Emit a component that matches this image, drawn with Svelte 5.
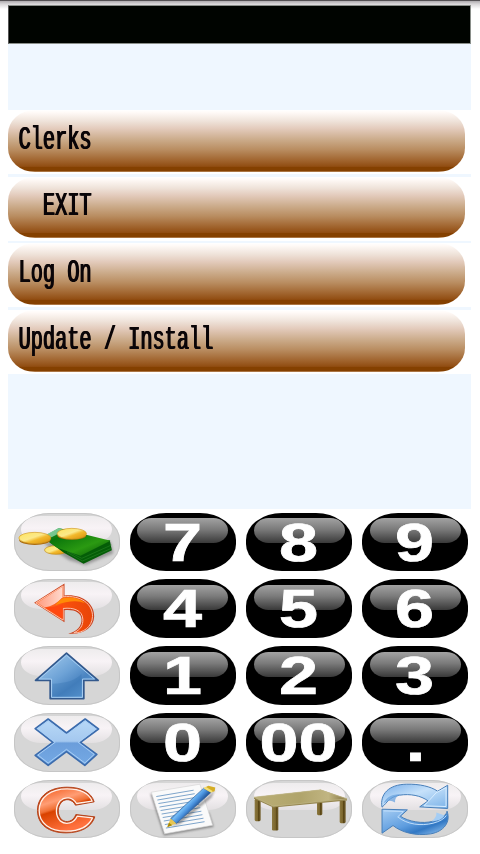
<script>
  const menu = ['Clerks', '  EXIT', 'Log On', 'Update / Install'];
  const keys = [
    'cash', '7', '8', '9',
    'back', '4', '5', '6',
    'up', '1', '2', '3',
    'cancel', '0', '00', '.',
    'clear', 'note', 'table', 'refresh'
  ];
  const isIcon = (k) => /^[a-z]/.test(k);
</script>

<div class="screen">
  <header></header>
  <main>
    <div class="spacer"></div>
    <div class="menu">
      {#each menu as item}
        <div class="row"><button class="item"><span>{item}</span></button></div>
      {/each}
    </div>
  </main>
  <div class="pad">
    {#each keys as k, i}
      <button class="key" class:light={isIcon(k)} aria-label={k}>
        <i class="gloss"></i>
        <svg viewBox="0 0 106 59" width="106" height="59">
          {#if k === 'cash'}
            <defs>
              <linearGradient id="bill" x1="0" y1="0" x2="1" y2="1"><stop offset="0" stop-color="#2f9c3a" /><stop offset=".3" stop-color="#0b760b" /><stop offset=".65" stop-color="#2b9a12" /><stop offset="1" stop-color="#045504" /></linearGradient>
              <linearGradient id="coin" x1="0" y1="0" x2="1" y2="1"><stop offset="0" stop-color="#ffe45a" /><stop offset=".45" stop-color="#fbe98b" /><stop offset=".6" stop-color="#f2b92c" /><stop offset="1" stop-color="#d98b08" /></linearGradient>
              <filter id="soft" x="-20%" y="-40%" width="140%" height="180%"><feGaussianBlur stdDeviation="5" /></filter>
            </defs>
            <g transform="translate(-13.5,-13) scale(.33333)">
              <path d="M130 130L205 180 255 195 338 160 330 125 200 120z" fill="#555" opacity=".5" filter="url(#soft)" />
              <ellipse cx="167" cy="150" rx="35" ry="13" fill="url(#coin)" stroke="#c08916" stroke-width="2" />
              <path d="M135 118L190 158 249 191 334 151 328 121 200 125z" fill="#045d07" />
              <path d="M200 157L246 183 333 145M200 153L244 175 333 135" fill="none" stroke="#2f8c2a" stroke-width="1.5" />
              <path d="M125 112L175 84 330 122 240 167 170 143z" fill="url(#bill)" />
              <path d="M135 105L175 84 185 87Q176 102 153 112z" fill="#8ed7ac" opacity=".8" />
              <ellipse cx="103" cy="120" rx="47" ry="15" fill="#a9680a" />
              <ellipse cx="103" cy="114" rx="48" ry="17" fill="url(#coin)" stroke="#d29a25" stroke-width="2" />
              <ellipse cx="214" cy="107" rx="43" ry="12" fill="#aa7408" />
              <ellipse cx="214" cy="101" rx="44" ry="16" fill="url(#coin)" stroke="#d29a25" stroke-width="2" />
            </g>
          {:else if k === 'back'}
            <defs>
              <linearGradient id="undo" x1="0" y1="0" x2="1" y2="0"><stop offset="0" stop-color="#ff7b42" /><stop offset=".5" stop-color="#f9500d" /><stop offset="1" stop-color="#e84508" /></linearGradient>
              <linearGradient id="undoHi" x1="0" y1="0" x2="1" y2="0"><stop offset="0" stop-color="#ff9c80" /><stop offset="1" stop-color="#ffd9cd" /></linearGradient>
            </defs>
            <g transform="translate(-13.5,-9.5) scale(.33333)" stroke-linejoin="round">
              <path d="M101 100L192 42V78C245 73 282 102 281 141C280 175 246 197 203 192C230 187 244 169 243 149C242 129 221 119 192 122V158z" fill="#c9421d" />
              <path d="M106 100L188 49V82C242 76 277 104 276 141C275 172 248 191 220 190C240 181 248 167 247 149C246 123 220 113 188 117V152z" fill="url(#undo)" stroke="#ffc1aa" stroke-width="3" />
              <path d="M111 100L186 52V83Q165 108 133 114z" fill="url(#undoHi)" />
              <path d="M186 86Q230 79 254 101Q222 87 164 107Q175 92 186 86z" fill="#ff8b07" />
              <path d="M133 114Q165 112 187 105V148z" fill="#ff4811" />
            </g>
          {:else if k === 'up'}
            <defs><linearGradient id="upFill" x1="0" y1="0" x2="1" y2="1"><stop offset="0" stop-color="#aed3f2" /><stop offset=".45" stop-color="#6da2d6" /><stop offset=".65" stop-color="#4a84c1" /><stop offset="1" stop-color="#74b0e6" /></linearGradient></defs>
            <g transform="translate(-13.5,-6.3) scale(.33333)" stroke-linejoin="round">
              <path d="M198 40L293 122H250V177H149V122H105z" fill="url(#upFill)" stroke="#33598d" stroke-width="5" />
              <path d="M198 47L282 118H246V173H153V118H116z" fill="none" stroke="#a5ccf0" stroke-width="3" />
              <path d="M156 132Q220 130 243 102V170H156z" fill="#2d6cad" opacity=".3" />
            </g>
          {:else if k === 'cancel'}
            <defs><linearGradient id="xFill" x1="0" y1="0" x2="0" y2="1"><stop offset="0" stop-color="#b9d9f7" /><stop offset=".48" stop-color="#a4c8ef" /><stop offset=".52" stop-color="#6b9edb" /><stop offset="1" stop-color="#74a9e4" /></linearGradient></defs>
            <g transform="translate(-13.5,-73) scale(.33333)" stroke-linejoin="round">
              <path d="M143 237L198 279 254 237 294 267 240 307 289 343 253 376 198 335 143 376 104 346 157 307 104 266z" fill="url(#xFill)" stroke="#3c6cad" stroke-width="5" />
              <path d="M143 243L198 285 254 243 287 267 233 307 281 343 253 369 198 328 143 369 112 345 164 307 112 266z" fill="none" stroke="#a8cef5" stroke-width="3" />
            </g>
          {:else if k === 'clear'}
            <defs><linearGradient id="cFill" x1="0" y1="0" x2=".4" y2="1"><stop offset="0" stop-color="#f25818" /><stop offset=".35" stop-color="#ff9d74" /><stop offset=".5" stop-color="#f07035" /><stop offset=".55" stop-color="#d94200" /><stop offset="1" stop-color="#ff713e" /></linearGradient></defs>
            <g transform="translate(-13.5,-7.8) scale(.33333)" stroke-linejoin="round">
              <path d="M281 89L225 99C216 81 195 77 183 90C170 106 170 127 183 142C197 154 219 148 226 127L283 134C273 166 239 182 197 182C145 182 111 158 111 115C111 71 147 45 200 45C241 45 272 59 281 89z" fill="#c44311" stroke="#b4441d" stroke-width="3" />
              <path d="M275 87L228 94C217 75 194 71 179 86C164 104 164 130 179 146C197 160 221 153 230 132L276 137C264 163 235 177 197 177C149 177 116 154 116 115C116 75 151 50 200 50C238 50 265 62 275 87z" fill="url(#cFill)" stroke="#fff0e8" stroke-width="4" />
            </g>
          {:else if k === 'note'}
            <defs>
              <linearGradient id="pen" gradientUnits="userSpaceOnUse" x1="188" y1="88" x2="213" y2="112"><stop offset="0" stop-color="#3674ba" /><stop offset=".3" stop-color="#75bcf6" /><stop offset=".65" stop-color="#4991dd" /><stop offset="1" stop-color="#285b9d" /></linearGradient>
              <filter id="noteShadow"><feGaussianBlur stdDeviation="3" /></filter>
            </defs>
            <g transform="translate(-7.7,-7.8) scale(.33333)">
              <path d="M84 64L125 190 274 164 260 121z" fill="#555" opacity=".65" filter="url(#noteShadow)" />
              <path d="M87 60L233 36 271 159 127 185z" fill="#fafafa" stroke="#d5d5d5" stroke-width="2" />
              {#each [0, 1, 2, 3, 4, 5, 6, 7, 8, 9] as n}
                <path d={`M${102 + n * 3.2} ${73 + n * 10.5}l${n < 2 ? 112 : 116} -19`} stroke="#7da5cb" stroke-width="3" />
              {/each}
              <path d="M145 163L265 67 279 50 268 75 174 155z" fill="#333" opacity=".45" filter="url(#noteShadow)" />
              <path d="M145 139L244 48 266 61 162 154z" fill="url(#pen)" stroke="#315f98" stroke-width="2" />
              <path d="M244 48L258 41 279 46 277 57 266 61z" fill="#d5ad24" />
              <path d="M244 48L250 44 272 57 266 61z" fill="#f2df78" />
              <path d="M145 139L135 164 162 154z" fill="#e7c653" />
              <path d="M140 152L135 165 150 159z" fill="#a88700" />
            </g>
          {:else if k === 'table'}
            <defs>
              <linearGradient id="wood" x1="0" y1="0" x2="1" y2="0"><stop offset="0" stop-color="#bbae76" /><stop offset=".5" stop-color="#b0a46b" /><stop offset=".8" stop-color="#c1b582" /><stop offset="1" stop-color="#81703c" /></linearGradient>
              <linearGradient id="leg" x1="0" y1="0" x2="1" y2="0"><stop offset="0" stop-color="#8b7840" /><stop offset=".55" stop-color="#7a652c" /><stop offset=".6" stop-color="#574413" /><stop offset="1" stop-color="#74602e" /></linearGradient>
            </defs>
            <g transform="translate(-6,-7.8) scale(.33333)">
              <rect x="44" y="80" width="18" height="67" rx="4" fill="url(#leg)" />
              <rect x="231" y="90" width="16" height="39" rx="4" fill="url(#leg)" />
              <rect x="299" y="84" width="18" height="69" rx="4" fill="url(#leg)" />
              <rect x="96" y="101" width="19" height="74" rx="4" fill="url(#leg)" />
              <path d="M42 75L242 53 321 80V85L100 106 42 80z" fill="#94844d" />
              <path d="M42 75L242 53 321 80 100 102z" fill="url(#wood)" stroke="#c3b98b" stroke-width="2" />
            </g>
          {:else if k === 'refresh'}
            <defs>
              <linearGradient id="r1" x1="0" y1="0" x2="1" y2="1"><stop offset="0" stop-color="#77aeea" /><stop offset=".45" stop-color="#c6e1fa" /><stop offset="1" stop-color="#7ab2e8" /></linearGradient>
              <linearGradient id="r2" x1="0" y1="0" x2="1" y2="1"><stop offset="0" stop-color="#a6cdf3" /><stop offset=".5" stop-color="#5e9ddf" /><stop offset=".7" stop-color="#3278c4" /><stop offset="1" stop-color="#a4d1fa" /></linearGradient>
            </defs>
            <g transform="translate(-122.3,-7.8) scale(.33333)" stroke-linejoin="round" stroke="#477eb9" stroke-width="3">
              <path d="M427 105C420 66 447 37 500 36C540 35 573 43 594 57L624 39V109L540 104 565 86C543 70 512 64 479 69C448 75 443 91 427 105z" fill="url(#r1)" />
              <path d="M431 94C440 73 459 66 482 66Q464 75 466 91Q448 79 431 94z" fill="#69a3df" stroke="none" opacity=".75" />
              <path d="M570 83L589 62 619 46V103L553 101z" fill="none" stroke="#d8edff" />
              <path d="M427 111L503 113 482 132C505 148 549 156 580 147C609 139 621 126 622 117C634 150 612 178 573 185C528 192 486 181 460 160L427 183z" fill="url(#r2)" />
              <path d="M432 116L491 118 474 134C502 157 544 162 580 153Q610 145 620 130" fill="none" stroke="#c1defa" />
              <path d="M590 121Q592 136 575 148Q605 146 615 130z" fill="#a4cdf4" stroke="none" />
            </g>
          {:else}
            <text transform="translate({k === '.' ? 53.5 : 52.6},48) scale(1.3,1)" text-anchor="middle">{k}</text>
          {/if}
        </svg>
      </button>
    {/each}
  </div>
</div>

<style>
  :global(body) { background: #fff; overflow: hidden; }
  .screen {
    box-sizing: border-box;
    width: 480px;
    height: 854px;
    padding: 5px 9px 0 8px;
    background: linear-gradient(#4d4a4d 0, #5d5a5d 1px, #b5b2b5 1.5px, #d8d6d8 4px, #fff 9px) no-repeat 0 0 / 100% 9px, #fff;
  }
  header {
    box-sizing: border-box;
    height: 39px;
    background: #000400;
    border: 1px solid #8a8f8a;
    border-left-color: #555;
  }
  main { height: 465px; background: #eff7ff; }
  .spacer { height: 66px; }
  .menu { display: flex; flex-direction: column; gap: 2.7px; }
  .row { height: 64px; background: #fff; }
  button { border: 0; padding: 0; display: block; }
  .item {
    width: 457px;
    height: 61.5px;
    border-radius: 27px / 24px;
    text-align: left;
    background: linear-gradient(#fff 0, #fffaf7 4%, #efe3da 18%, #e3cbbc 30%, #cbab8a 48%, #b98d61 64%, #a1652f 81%, #914d12 91%, #844000 92%, #844000 98%, #c59a72 100%);
  }
  .item span {
    display: block;
    margin: -2px 0 0 10px;
    transform: scaleX(.5965);
    transform-origin: 0 50%;
    white-space: pre;
    font: 34px/38px "Liberation Mono", monospace;
    color: #0a0508;
    text-shadow: 1px 0 0 #0a0508, 2px 0 0 #0a0508;
  }
  .pad {
    display: grid;
    grid-template-columns: repeat(4, 106px);
    grid-auto-rows: 58.7px;
    gap: 8px 10.25px;
    margin: 3.8px 0 0 5.5px;
  }
  .key {
    position: relative;
    width: 106px;
    height: 58.7px;
    border-radius: 36px / 27px;
    background: #000;
  }
  .light { background: #d6d6d6; box-shadow: inset 0 0 0 1px #c6c6c6; }
  .gloss {
    position: absolute;
    left: 7.5px;
    top: 5.5px;
    width: 91px;
    height: 25px;
    border-radius: 15px / 13px;
    background: linear-gradient(#a2a2a2, #7b7b7b 45%, #393939);
  }
  .light .gloss { top: 3px; height: 27px; border-radius: 22px / 15px; background: linear-gradient(#eeeced, #f8f3f6 45%, #e3e0e2); }
  svg { position: relative; display: block; overflow: visible; }
  text { font: bold 54px "Liberation Sans", Arial, sans-serif; fill: #fff; stroke: #fff; stroke-width: .7px; }
</style>
